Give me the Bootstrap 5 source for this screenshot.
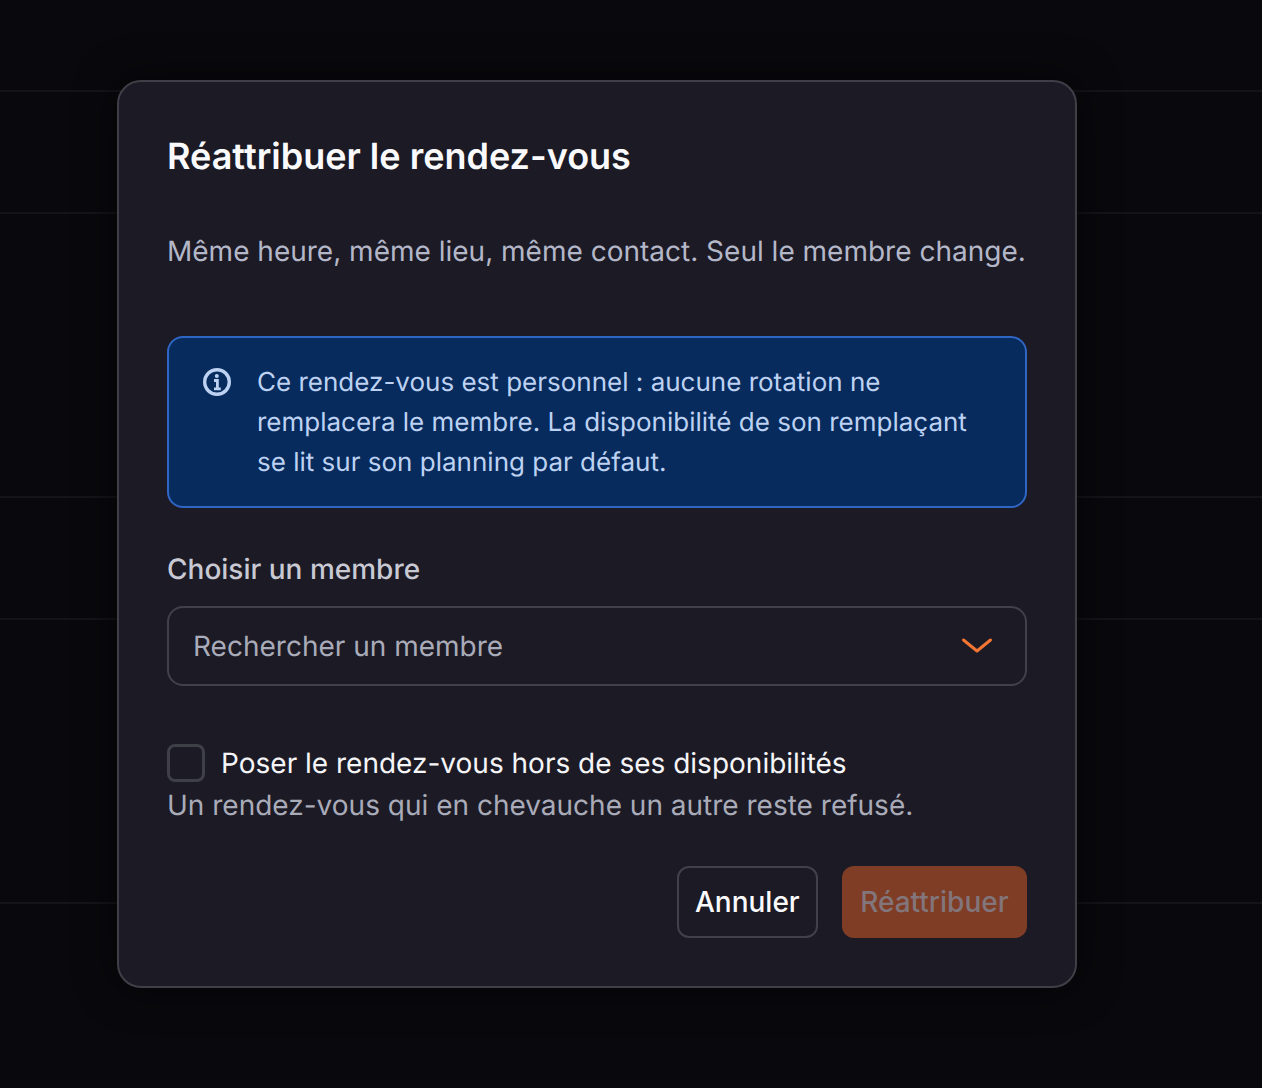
<!doctype html>
<html lang="fr">
<head>
<meta charset="utf-8">
<title>Réattribuer le rendez-vous</title>
<link href="https://cdn.jsdelivr.net/npm/bootstrap@5.3.0/dist/css/bootstrap.min.css" rel="stylesheet">
<style>
html,body{height:100%;}
body{margin:0;background:#09090d;font-family:Inter,"Liberation Sans",sans-serif;overflow:hidden;position:relative;text-rendering:geometricPrecision;}
.bg-rows{height:1088px;}
.bg-line{border-bottom:2px solid #141419;}
.h-a{height:92px;}.h-b{height:122px;}.h-c{height:284px;}
.dlg-layer{position:absolute;inset:0;display:flex;align-items:flex-start;justify-content:center;padding:80px 68px 0 0;}
.dlg{width:960px;height:908px;background:#1b1a25;border:2px solid #3f3f48;border-radius:24px;padding:48px;box-shadow:0 0 40px rgba(0,0,0,.6);display:flex;flex-direction:column;}
.dlg-title{font-size:36px;font-weight:600;line-height:48px;color:#fafafc;margin:2px 0 0;}
.dlg-sub{font-size:28px;line-height:40px;color:#b4b7c8;margin:51px 0 0;white-space:nowrap;}
.info-box{margin-top:65px;height:172px;background:#072b5c;border:2px solid #2f66c4;border-radius:16px;padding:25px 32px 0;display:flex;gap:24px;color:#bdd2f2;font-size:26px;line-height:40px;}
.info-box svg{flex:none;margin-top:3px;}
.fld-label{font-size:28px;font-weight:500;line-height:40px;color:#c8c9d3;margin:41px 0 17px;}
.fld-select{height:80px;border:2px solid #41414b;border-radius:16px;padding:0 32px 0 24px;display:flex;align-items:center;justify-content:space-between;font-size:28px;color:#a9abb8;}
.chk-row{margin-top:57px;display:flex;align-items:center;gap:16px;font-size:28px;line-height:40px;color:#f5f5f8;}
.chk-box{width:38px;height:38px;border:3px solid #3f3f48;border-radius:8px;flex:none;}
.chk-hint{font-size:28px;line-height:40px;color:#a9abb8;margin:2px 0 0;}
.act-row{margin-top:41px;display:flex;justify-content:flex-end;gap:24px;}
.act-btn{height:72px;border-radius:12px;font-size:28px;font-weight:500;display:flex;align-items:center;}
.act-ghost{background:transparent;border:2px solid #41414b;color:#fafafc;padding:0 16px;}
.act-main:disabled{background:#7f3d25;border:0;color:#82757b;opacity:1;padding:0 18.500px;}
</style>
</head>
<body>
<div class="bg-rows">
  <div class="bg-line h-a"></div>
  <div class="bg-line h-b"></div>
  <div class="bg-line h-c"></div>
  <div class="bg-line h-b"></div>
  <div class="bg-line h-c"></div>
</div>
<div class="dlg-layer">
  <div class="dlg" role="dialog">
    <h2 class="dlg-title">Réattribuer le rendez-vous</h2>
    <p class="dlg-sub">Même heure, même lieu, même contact. Seul le membre change.</p>
    <div class="info-box">
      <svg width="32" height="32" viewBox="0 0 32 32" fill="none" stroke="#bdd2f2" stroke-width="3.4"><circle cx="16" cy="16" r="12.3"/><path d="M13 14.500h3.400v8M13 22.800h6.800" stroke-width="2.800"/><circle cx="15.800" cy="10" r="2" fill="#bdd2f2" stroke="none"/></svg>
      <div>Ce rendez-vous est personnel : aucune rotation ne remplacera le membre. La disponibilité de son remplaçant se lit sur son planning par défaut.</div>
    </div>
    <div class="fld-label">Choisir un membre</div>
    <div class="fld-select">
      <span>Rechercher un membre</span>
      <svg width="32" height="18" viewBox="0 0 32 18" fill="none" stroke="#f47533" stroke-width="3" stroke-linecap="round" stroke-linejoin="round"><path d="M2.500 3l13.500 11L29.500 3"/></svg>
    </div>
    <div class="chk-row"><span class="chk-box"></span><span>Poser le rendez-vous hors de ses disponibilités</span></div>
    <p class="chk-hint">Un rendez-vous qui en chevauche un autre reste refusé.</p>
    <div class="act-row">
      <button class="btn act-btn act-ghost" type="button">Annuler</button>
      <button class="btn act-btn act-main" type="button" disabled>Réattribuer</button>
    </div>
  </div>
</div>
<script src="https://cdn.jsdelivr.net/npm/bootstrap@5.3.0/dist/js/bootstrap.bundle.min.js"></script>
</body>
</html>
